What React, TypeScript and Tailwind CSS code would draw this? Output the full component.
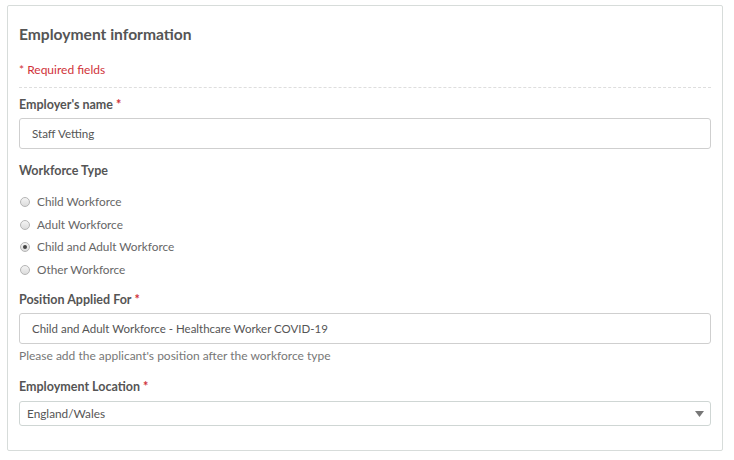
import React from "react";

const font = { fontFamily: "Lato, 'Noto Sans', sans-serif" };

function Radio({ label, checked }: { label: string; checked?: boolean }) {
  return (
    <div className="flex items-center h-[22.5px]">
      <span className="ml-[1px] w-[10px] h-[10px] rounded-full border border-[#b5b5b5] bg-gradient-to-b from-[#f4f4f4] to-[#dcdcdc] flex items-center justify-center">
        {checked && <span className="w-[4px] h-[4px] rounded-full bg-[#444]" />}
      </span>
      <span className="ml-[7px] text-[11.8px] text-[#666]">{label}</span>
    </div>
  );
}

export default function App() {
  return (
    <div className="w-[734px] h-[460px] bg-white pt-[5px] pl-[7px]" style={font}>
      <div className="w-[716px] h-[446px] border border-[#d7dcda] rounded-[2px] px-[11px] pt-[19px]">
        <div className="h-[20px] flex items-center text-[15.6px] font-bold text-[#555]">
          Employment information
        </div>
        <div className="mt-[17px] h-[16px] flex items-center text-[12px] text-[#d0323a]">
          * Required fields
        </div>
        <div className="mt-[9px] border-t border-dashed border-[#dedede]" />
        <div className="mt-[9px] h-[16px] flex items-center text-[12.5px] font-bold text-[#555]">
          Employer's name<span className="ml-[3px] text-[#d0323a]">*</span>
        </div>
        <div className="mt-[5px] h-[31px] border border-[#cfcfcf] rounded-[3px] flex items-center pl-[12px] text-[11.6px] text-[#555]">
          Staff Vetting
        </div>
        <div className="mt-[14px] h-[16px] flex items-center text-[12.5px] font-bold text-[#555]">
          Workforce Type
        </div>
        <div className="mt-[12px] flex flex-col">
          <Radio label="Child Workforce" />
          <Radio label="Adult Workforce" />
          <Radio label="Child and Adult Workforce" checked />
          <Radio label="Other Workforce" />
        </div>
        <div className="mt-[11px] h-[16px] flex items-center text-[12.5px] font-bold text-[#555]">
          Position Applied For<span className="ml-[3px] text-[#d0323a]">*</span>
        </div>
        <div className="mt-[5px] h-[31px] border border-[#cfcfcf] rounded-[3px] flex items-center pl-[12px] text-[11.5px] text-[#555]">
          Child and Adult Workforce - Healthcare Worker COVID-19
        </div>
        <div className="mt-[4px] h-[16px] flex items-center text-[12px] text-[#777]">
          Please add the applicant's position after the workforce type
        </div>
        <div className="mt-[15px] h-[16px] flex items-center text-[12.5px] font-bold text-[#555]">
          Employment Location<span className="ml-[3px] text-[#d0323a]">*</span>
        </div>
        <div className="mt-[6px] h-[25px] border border-[#cfd6d4] rounded-[3px] flex items-center pl-[7px] pr-[6px] text-[11.8px] text-[#555]">
          <span className="flex-1">England/Wales</span>
          <svg width="9" height="6" viewBox="0 0 9 6">
            <path d="M0 0 H9 L4.5 6 Z" fill="#777" />
          </svg>
        </div>
      </div>
    </div>
  );
}
